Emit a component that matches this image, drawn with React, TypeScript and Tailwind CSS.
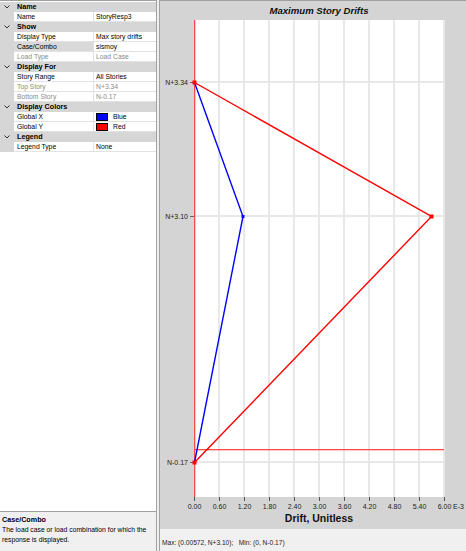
import React from "react";

type Row =
  | { h: string }
  | { n: string; v: string; sel?: boolean; dis?: boolean; color?: string };

const rows: Row[] = [
  { h: "Name" },
  { n: "Name", v: "StoryResp3" },
  { h: "Show" },
  { n: "Display Type", v: "Max story drifts" },
  { n: "Case/Combo", v: "sismoy", sel: true },
  { n: "Load Type", v: "Load Case", dis: true },
  { h: "Display For" },
  { n: "Story Range", v: "All Stories" },
  { n: "Top Story", v: "N+3.34", dis: true },
  { n: "Bottom Story", v: "N-0.17", dis: true },
  { h: "Display Colors" },
  { n: "Global X", v: "Blue", color: "#0000ff" },
  { n: "Global Y", v: "Red", color: "#ff0000" },
  { h: "Legend" },
  { n: "Legend Type", v: "None" },
];

function Chevron() {
  return (
    <svg width="6" height="4" viewBox="0 0 6 4">
      <polyline points="0.5,0.5 3,3 5.5,0.5" fill="none" stroke="#333" strokeWidth="1" />
    </svg>
  );
}

function GridRow({ r }: { r: Row }) {
  if ("h" in r) {
    return (
      <div className="flex h-[10px] bg-[#d6d6d6]">
        <div className="w-[14px] flex items-center justify-center">
          <Chevron />
        </div>
        <div className="flex-1 pl-[3px] font-bold text-[7.2px] leading-[10px] text-black">{r.h}</div>
      </div>
    );
  }
  const tc = r.dis ? "text-[#8a8a8a]" : "text-black";
  return (
    <div className={`flex h-[10px] text-[6.8px] leading-[9px] ${tc}`}>
      <div className="w-[14px] bg-[#d6d6d6]" />
      <div
        className={`w-[80px] pl-[3px] border-b border-r border-[#e2e2e2] ${r.sel ? "bg-[#d9d9d9]" : "bg-white"}`}
      >
        {r.n}
      </div>
      <div className="flex-1 pl-[2px] border-b border-[#e2e2e2] bg-white flex items-center">
        {r.color && (
          <span
            className="inline-block w-[12px] h-[8px] border border-black mr-[5px]"
            style={{ backgroundColor: r.color }}
          />
        )}
        <span>{r.v}</span>
      </div>
    </div>
  );
}

const ticks = ["0.00", "0.60", "1.20", "1.80", "2.40", "3.00", "3.60", "4.20", "4.80", "5.40", "6.00"];
const stories = [
  { y: 62, l: "N+3.34" },
  { y: 196, l: "N+3.10" },
  { y: 442, l: "N-0.17" },
];

function Chart() {
  return (
    <svg width="306" height="490" viewBox="0 0 306 490" className="block">
      <rect x="34" y="0" width="250" height="477" fill="#ffffff" />
      {ticks.map((_, i) =>
        i === 0 ? null : (
          <line key={"v" + i} x1={34 + 25 * i} y1={0} x2={34 + 25 * i} y2={477} stroke="#e8e8e8" strokeWidth="2" />
        )
      )}
      {stories.map((s) => (
        <g key={s.l}>
          <line x1={34} y1={s.y} x2={284} y2={s.y} stroke="#e8e8e8" strokeWidth="2" />
          <line x1={30} y1={s.y + 0.5} x2={34} y2={s.y + 0.5} stroke="#666" strokeWidth="1" />
          <text x={28} y={s.y + 3} textAnchor="end" fontSize="7" fill="#222" fontFamily="Liberation Sans, Arial, sans-serif">
            {s.l}
          </text>
        </g>
      ))}
      <rect x={35} y={429} width={249} height={1.3} fill="#ff4848" />
      <rect x={34} y={0} width={1.3} height={477} fill="#ff4848" />
      {ticks.map((t, i) => (
        <g key={"t" + i}>
          <line x1={34.5 + 25 * i} y1={477} x2={34.5 + 25 * i} y2={481} stroke="#555" strokeWidth="1" />
          <text
            x={34.5 + 25 * i}
            y={489}
            textAnchor="middle"
            fontSize="7"
            fill="#222"
            fontFamily="Liberation Sans, Arial, sans-serif"
          >
            {t}
          </text>
        </g>
      ))}
      <text x={293} y={489} fontSize="7" fill="#222" fontFamily="Liberation Sans, Arial, sans-serif">
        E-3
      </text>
      <polyline points="34.5,62.5 83,196.5 34.5,442.5" fill="none" stroke="#0000ff" strokeWidth="1.4" />
      <polyline points="34.5,62.5 271.5,196.5 34.5,442.5" fill="none" stroke="#ff0000" strokeWidth="1.4" />
      <rect x={81.5} y={195} width={3} height={3} fill="#0000ff" />
      <rect x={32.5} y={60.5} width={4} height={4} fill="#ff0000" />
      <rect x={269.5} y={194.5} width={4} height={4} fill="#ff0000" />
      <rect x={32.5} y={440.5} width={4} height={4} fill="#ff0000" />
    </svg>
  );
}

export default function App() {
  return (
    <div className="w-[466px] h-[551px] flex bg-[#f0f0f0] overflow-hidden font-['Liberation_Sans',Arial,sans-serif]">
      <div className="w-[157px] h-full flex flex-col border-r border-[#a0a0a0] bg-white">
        <div className="border-t border-[#a0a0a0] pt-[1px] bg-white">
          {rows.map((r, i) => (
            <GridRow key={i} r={r} />
          ))}
        </div>
        <div className="flex-1 bg-white" />
        <div className="h-[40px] border-t border-[#a0a0a0] bg-[#f0f0f0] px-[2px] pt-[3px] text-[6.8px] leading-[10px] text-black">
          <div className="font-bold text-[7.2px]">Case/Combo</div>
          <div>The load case or load combination for which the</div>
          <div>response is displayed.</div>
        </div>
      </div>
      <div className="flex-1 ml-[2px] flex flex-col bg-[#d4d4d4] border-l border-t border-[#a0a0a0]">
        <div className="h-[19px] ml-[34px] w-[250px] text-center font-bold italic text-[9.6px] leading-[19px] text-[#111]">
          Maximum Story Drifts
        </div>
        <Chart />
        <div className="h-[19px] ml-[34px] w-[250px] text-center font-bold text-[10.5px] leading-[17px] text-[#111]">
          Drift, Unitless
        </div>
        <div className="flex-1 bg-[#f0f0f0] pl-[2px] pt-[9px] text-[6.6px] leading-[9px] text-[#222] whitespace-pre">
          {"Max: (0.00572, N+3.10);   Min: (0, N-0.17)"}
        </div>
      </div>
    </div>
  );
}
